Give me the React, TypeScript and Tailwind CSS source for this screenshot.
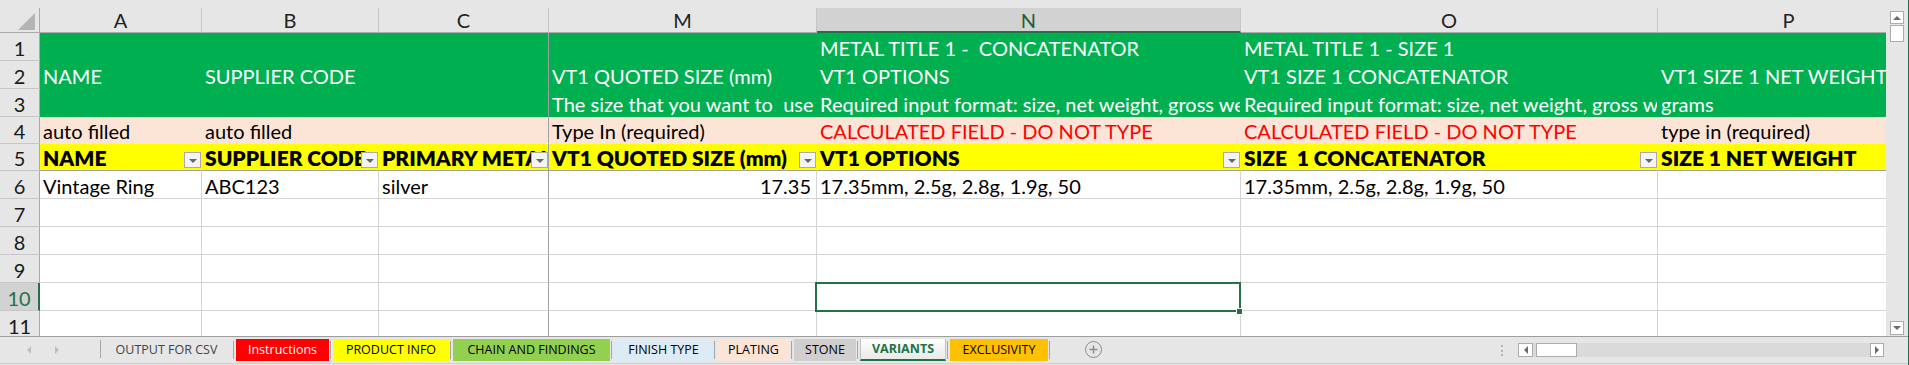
import React from "react";

type Fill = "green" | "peach" | "yellow" | "white";
type CellValue = string | { t: string; red?: boolean; right?: boolean };

const columns = ["A", "B", "C", "M", "N", "O", "P"];

const rows: { n: number; fill: Fill; cells: CellValue[] }[] = [
  { n: 1, fill: "green", cells: ["", "", "", "", "METAL TITLE 1 -  CONCATENATOR", "METAL TITLE 1 - SIZE 1", ""] },
  {
    n: 2,
    fill: "green",
    cells: ["NAME", "SUPPLIER CODE", "", "VT1 QUOTED SIZE (mm)", "VT1 OPTIONS", "VT1 SIZE 1 CONCATENATOR", "VT1 SIZE 1 NET WEIGHT"],
  },
  {
    n: 3,
    fill: "green",
    cells: [
      "",
      "",
      "",
      "The size that you want to  use in the title",
      "Required input format: size, net weight, gross weight, stone weight, price",
      "Required input format: size, net weight, gross weight, stone weight, price",
      "grams",
    ],
  },
  {
    n: 4,
    fill: "peach",
    cells: [
      "auto filled",
      "auto filled",
      "",
      "Type In (required)",
      { t: "CALCULATED FIELD - DO NOT TYPE", red: true },
      { t: "CALCULATED FIELD - DO NOT TYPE", red: true },
      "type in (required)",
    ],
  },
  {
    n: 5,
    fill: "yellow",
    cells: ["NAME", "SUPPLIER CODE", "PRIMARY METAL", "VT1 QUOTED SIZE (mm)", "VT1 OPTIONS", "SIZE  1 CONCATENATOR", "SIZE 1 NET WEIGHT"],
  },
  {
    n: 6,
    fill: "white",
    cells: ["Vintage Ring", "ABC123", "silver", { t: "17.35", right: true }, "17.35mm, 2.5g, 2.8g, 1.9g, 50", "17.35mm, 2.5g, 2.8g, 1.9g, 50", ""],
  },
  { n: 7, fill: "white", cells: ["", "", "", "", "", "", ""] },
  { n: 8, fill: "white", cells: ["", "", "", "", "", "", ""] },
  { n: 9, fill: "white", cells: ["", "", "", "", "", "", ""] },
  { n: 10, fill: "white", cells: ["", "", "", "", "", "", ""] },
  { n: 11, fill: "white", cells: ["", "", "", "", "", "", ""] },
];

// fills hide the gridlines; column C carries the freeze-pane line
function fillClass(fill: Fill, col: number) {
  const freeze = col === 2;
  if (fill === "green")
    return freeze
      ? "text-[20px] bg-[#00B050] text-white border-b-[#00B050] border-r-[#A0A0A0]"
      : "text-[20px] bg-[#00B050] text-white border-b-[#00B050] border-r-[#00B050]";
  if (fill === "peach")
    return freeze
      ? "text-[20px] bg-[#FCE4D6] border-b-[#FCE4D6] border-r-[#A0A0A0]"
      : "text-[20px] bg-[#FCE4D6] border-b-[#FCE4D6] border-r-[#FCE4D6]";
  if (fill === "yellow")
    return freeze
      ? "text-[21px] bg-[#FFFF00] font-extrabold border-b-[#A0A0A0] border-r-[#A0A0A0]"
      : "text-[21px] bg-[#FFFF00] font-extrabold border-b-[#A0A0A0] border-r-[#FFFF00]";
  return freeze
    ? "text-[20px] bg-white border-b-[#D4D4D4] border-r-[#A0A0A0]"
    : "text-[20px] bg-white border-b-[#D4D4D4] border-r-[#D4D4D4]";
}

function FilterButton() {
  return (
    <div className="absolute right-0 bottom-[2px] flex h-[16px] w-[17px] items-center justify-center border border-[#ABABAB] bg-[#F4F4F4] pt-[2px]">
      <div className="h-0 w-0 border-x-[4px] border-t-[4px] border-x-transparent border-t-[#666666]" />
    </div>
  );
}

function RowHead({ n }: { n: number }) {
  if (n === 10)
    return (
      <div className="flex items-center justify-center border-b border-r-2 border-b-[#C6C6C6] border-r-[#217346] bg-[#D2D2D2] pt-[2px] text-[20px] text-[#217346]">
        {n}
      </div>
    );
  return (
    <div className="flex items-center justify-center border-b border-r border-b-[#C6C6C6] border-r-[#ABABAB] bg-[#E6E6E6] pt-[2px] text-[20px] text-[#1A1A1A]">
      {n}
    </div>
  );
}

function Sheet() {
  return (
    <div className="relative h-[328px] w-[1886px] shrink-0 overflow-hidden bg-white">
      <div className="grid w-[1920px] grid-cols-[40px_162px_177px_170px_268px_424px_417px_262px] grid-rows-[25px_28px_28px_28px_27px_27px_28px_28px_28px_28px_28px_28px]">
        <div className="relative border-b border-r border-[#ABABAB] bg-[#E6E6E6]">
          <svg className="absolute right-[4px] bottom-[2px]" width="17" height="17" viewBox="0 0 17 17">
            <polygon points="17,0 17,17 0,17" fill="#B4B4B4" />
          </svg>
        </div>
        {columns.map((c) =>
          c === "N" ? (
            <div
              key={c}
              className="flex items-center justify-center border-b-2 border-r border-b-[#217346] border-r-[#C6C6C6] bg-[#D2D2D2] text-[20px] text-[#1D5E3A]"
            >
              {c}
            </div>
          ) : (
            <div
              key={c}
              className="flex items-center justify-center border-b border-r border-b-[#ABABAB] border-r-[#C6C6C6] bg-[#E6E6E6] text-[20px] text-[#222222]"
            >
              {c}
            </div>
          )
        )}

        {rows.map((row) => (
          <React.Fragment key={row.n}>
            <RowHead n={row.n} />
            {row.cells.map((cell, i) => {
              const v = typeof cell === "string" ? { t: cell } : cell;
              return (
                <div
                  key={i}
                  className={`relative flex items-end overflow-hidden border-r border-b whitespace-pre leading-[24px] ${fillClass(row.fill, i)} ${
                    v.right ? "justify-end pr-[5px]" : "pl-[3px]"
                  } ${v.red ? "text-[#FF0000]" : ""}`}
                >
                  <span>{v.t}</span>
                  {row.fill === "yellow" && <FilterButton />}
                </div>
              );
            })}
          </React.Fragment>
        ))}
      </div>

      {/* active cell N10 */}
      <div className="absolute left-[815px] top-[274px] h-[30px] w-[426px] border-2 border-[#217346]" />
      <div className="absolute left-[1236px] top-[300px] h-[7px] w-[7px] border border-white bg-[#217346]" />
    </div>
  );
}

function VScroll() {
  return (
    <div className="flex h-[328px] w-[22px] shrink-0 flex-col pl-[4px] pt-[3px] pb-[1px]">
      <div className="flex h-[13px] w-[14px] items-center justify-center border border-[#ABABAB] bg-white">
        <div className="h-0 w-0 border-x-[4px] border-b-[4px] border-x-transparent border-b-[#6B6B6B]" />
      </div>
      <div className="mt-px h-[17px] w-[14px] border border-[#ABABAB] bg-white" />
      <div className="flex-1" />
      <div className="flex h-[14px] w-[14px] items-center justify-center border border-[#ABABAB] bg-white">
        <div className="h-0 w-0 border-x-[4px] border-t-[4px] border-x-transparent border-t-[#6B6B6B]" />
      </div>
    </div>
  );
}

const tabs = [
  { name: "OUTPUT FOR CSV", cls: "w-[131px] text-[#444444]" },
  { name: "Instructions", cls: "w-[93px] bg-[#FF0000] text-white" },
  { name: "PRODUCT INFO", cls: "w-[116px] bg-[#FFFF00] text-black" },
  { name: "CHAIN AND FINDINGS", cls: "w-[157px] bg-[#92D050] text-black" },
  { name: "FINISH TYPE", cls: "w-[99px] bg-[#DDEBF7] text-black" },
  { name: "PLATING", cls: "w-[73px] bg-[#FCE4D6] text-black" },
  { name: "STONE", cls: "w-[62px] bg-[#D0CECE] text-black" },
  { name: "VARIANTS", cls: "w-[86px] border-x border-b-2 border-x-[#C4C4C4] border-b-[#217346] bg-gradient-to-b from-white to-[#E9E9E9] font-bold text-[#217346]" },
  { name: "EXCLUSIVITY", cls: "w-[98px] bg-[#FFC000] text-black" },
];

function TabBar() {
  return (
    <div className="flex h-[28px] shrink-0 items-start border-y border-t-[#9E9E9E] border-b-[#CFCFCF] font-['Open_Sans','Noto_Sans',sans-serif] text-[12.5px]">
      <div className="flex h-full w-[100px] items-center gap-[24px] pl-[27px]">
        <div className="h-0 w-0 border-y-[4px] border-r-[4px] border-y-transparent border-r-[#BDBDBD]" />
        <div className="h-0 w-0 border-y-[4px] border-l-[4px] border-y-transparent border-l-[#BDBDBD]" />
      </div>
      <div className="mt-[3px] h-[18px] w-px bg-[#A6A6A6]" />
      {tabs.map((tab) => (
        <React.Fragment key={tab.name}>
          <div className={`mt-[2px] flex h-[22px] items-center justify-center whitespace-nowrap ${tab.cls}`}>{tab.name}</div>
          <div className="mt-[4px] mr-[2px] ml-px h-[18px] w-px bg-[#A6A6A6]" />
        </React.Fragment>
      ))}
      <div className="ml-[33px] mt-[4px] flex h-[17px] w-[17px] items-center justify-center rounded-full border-[1.5px] border-[#8C8C8C]">
        <svg width="9" height="9" viewBox="0 0 9 9">
          <path d="M4.5 0.5v8M0.5 4.5h8" stroke="#8C8C8C" strokeWidth="1.5" />
        </svg>
      </div>
      <div className="flex-1" />
      <div className="mt-[8px] flex w-[2px] flex-col gap-[2.5px]">
        <div className="h-[2px] w-[2px] bg-[#B4B4B4]" />
        <div className="h-[2px] w-[2px] bg-[#B4B4B4]" />
        <div className="h-[2px] w-[2px] bg-[#B4B4B4]" />
      </div>
      <div className="ml-[15px] mt-[6px] flex h-[14px] w-[366px] bg-[#DADADA]">
        <div className="flex h-full w-[15px] items-center justify-center border border-[#ABABAB] bg-white">
          <div className="h-0 w-0 border-y-[4px] border-r-[4px] border-y-transparent border-r-[#6B6B6B]" />
        </div>
        <div className="ml-[3px] h-full w-[41px] border border-[#ABABAB] bg-white" />
        <div className="flex-1" />
        <div className="flex h-full w-[14px] items-center justify-center border border-[#ABABAB] bg-white">
          <div className="h-0 w-0 border-y-[4px] border-l-[4px] border-y-transparent border-l-[#6B6B6B]" />
        </div>
      </div>
      <div className="w-[24px]" />
    </div>
  );
}

export default function App() {
  return (
    <div className="flex h-[365px] w-[1909px] flex-col overflow-hidden border-r border-r-[#217346] bg-[#E6E6E6] font-['Lato','Liberation_Sans',sans-serif] text-black">
      <div className="h-[8px] shrink-0" />
      <div className="flex h-[328px] shrink-0">
        <Sheet />
        <VScroll />
      </div>
      <TabBar />
    </div>
  );
}
